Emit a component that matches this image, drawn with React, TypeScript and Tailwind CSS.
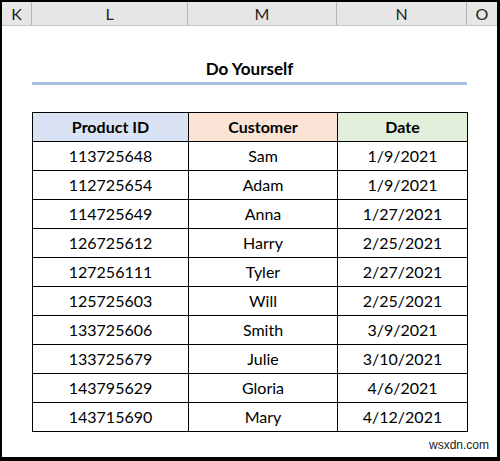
const rows: [string, string, string][] = [
  ["113725648", "Sam", "1/9/2021"],
  ["112725654", "Adam", "1/9/2021"],
  ["114725649", "Anna", "1/27/2021"],
  ["126725612", "Harry", "2/25/2021"],
  ["127256111", "Tyler", "2/27/2021"],
  ["125725603", "Will", "2/25/2021"],
  ["133725606", "Smith", "3/9/2021"],
  ["133725679", "Julie", "3/10/2021"],
  ["143795629", "Gloria", "4/6/2021"],
  ["143715690", "Mary", "4/12/2021"],
];

const COLS = [
  { label: "K", w: "w-[30px]" },
  { label: "L", w: "w-[156px]" },
  { label: "M", w: "w-[149px]" },
  { label: "N", w: "w-[130px]" },
  { label: "O", w: "w-[30px]" },
];

export default function App() {
  return (
    <div className="w-[500px] h-[461px] bg-white border-t-2 border-l-2 border-r-[3px] border-b-[4px] border-black flex flex-col font-['Lato',sans-serif] text-black">
      {/* column letters */}
      <div className="flex h-[24px] shrink-0 bg-[#e6e6e6] border-b border-[#c4c4c4]">
        {COLS.map((c, i) => (
          <div
            key={c.label}
            className={`${c.w} flex items-center justify-center text-[16px] text-[#222] ${i < COLS.length - 1 ? "border-r border-[#b4b4b4]" : ""}`}
          >
            {c.label}
          </div>
        ))}
      </div>

      <div className="flex-1 flex flex-col pl-[30px]">
        <div className="w-[435px] h-[56px] flex items-end justify-center pb-[3px]">
          <span className="text-[17px] font-bold leading-[20px]">Do Yourself</span>
        </div>
        <div className="w-[435px] h-[3px] bg-[#a7bfe2]" />

        <table className="mt-[27px] w-[435px] table-fixed border-collapse text-[16px]">
          <colgroup>
            <col className="w-[156px]" />
            <col className="w-[149px]" />
            <col className="w-[130px]" />
          </colgroup>
          <thead>
            <tr className="h-[29px] font-bold">
              <th className="border border-black bg-[#dae3f3] p-0">Product ID</th>
              <th className="border border-black bg-[#fbe3d6] p-0">Customer</th>
              <th className="border border-black bg-[#e2efda] p-0">Date</th>
            </tr>
          </thead>
          <tbody>
            {rows.map(([id, name, date]) => (
              <tr key={id} className="h-[29px]">
                <td className="border border-black text-center p-0">{id}</td>
                <td className="border border-black text-center p-0">{name}</td>
                <td className="border border-black text-center p-0">{date}</td>
              </tr>
            ))}
          </tbody>
        </table>

        <div className="mt-auto mb-[3px] flex justify-end pr-[8px] font-['Liberation_Sans',sans-serif] text-[12px] text-[#222]">
          wsxdn.com
        </div>
      </div>
    </div>
  );
}
